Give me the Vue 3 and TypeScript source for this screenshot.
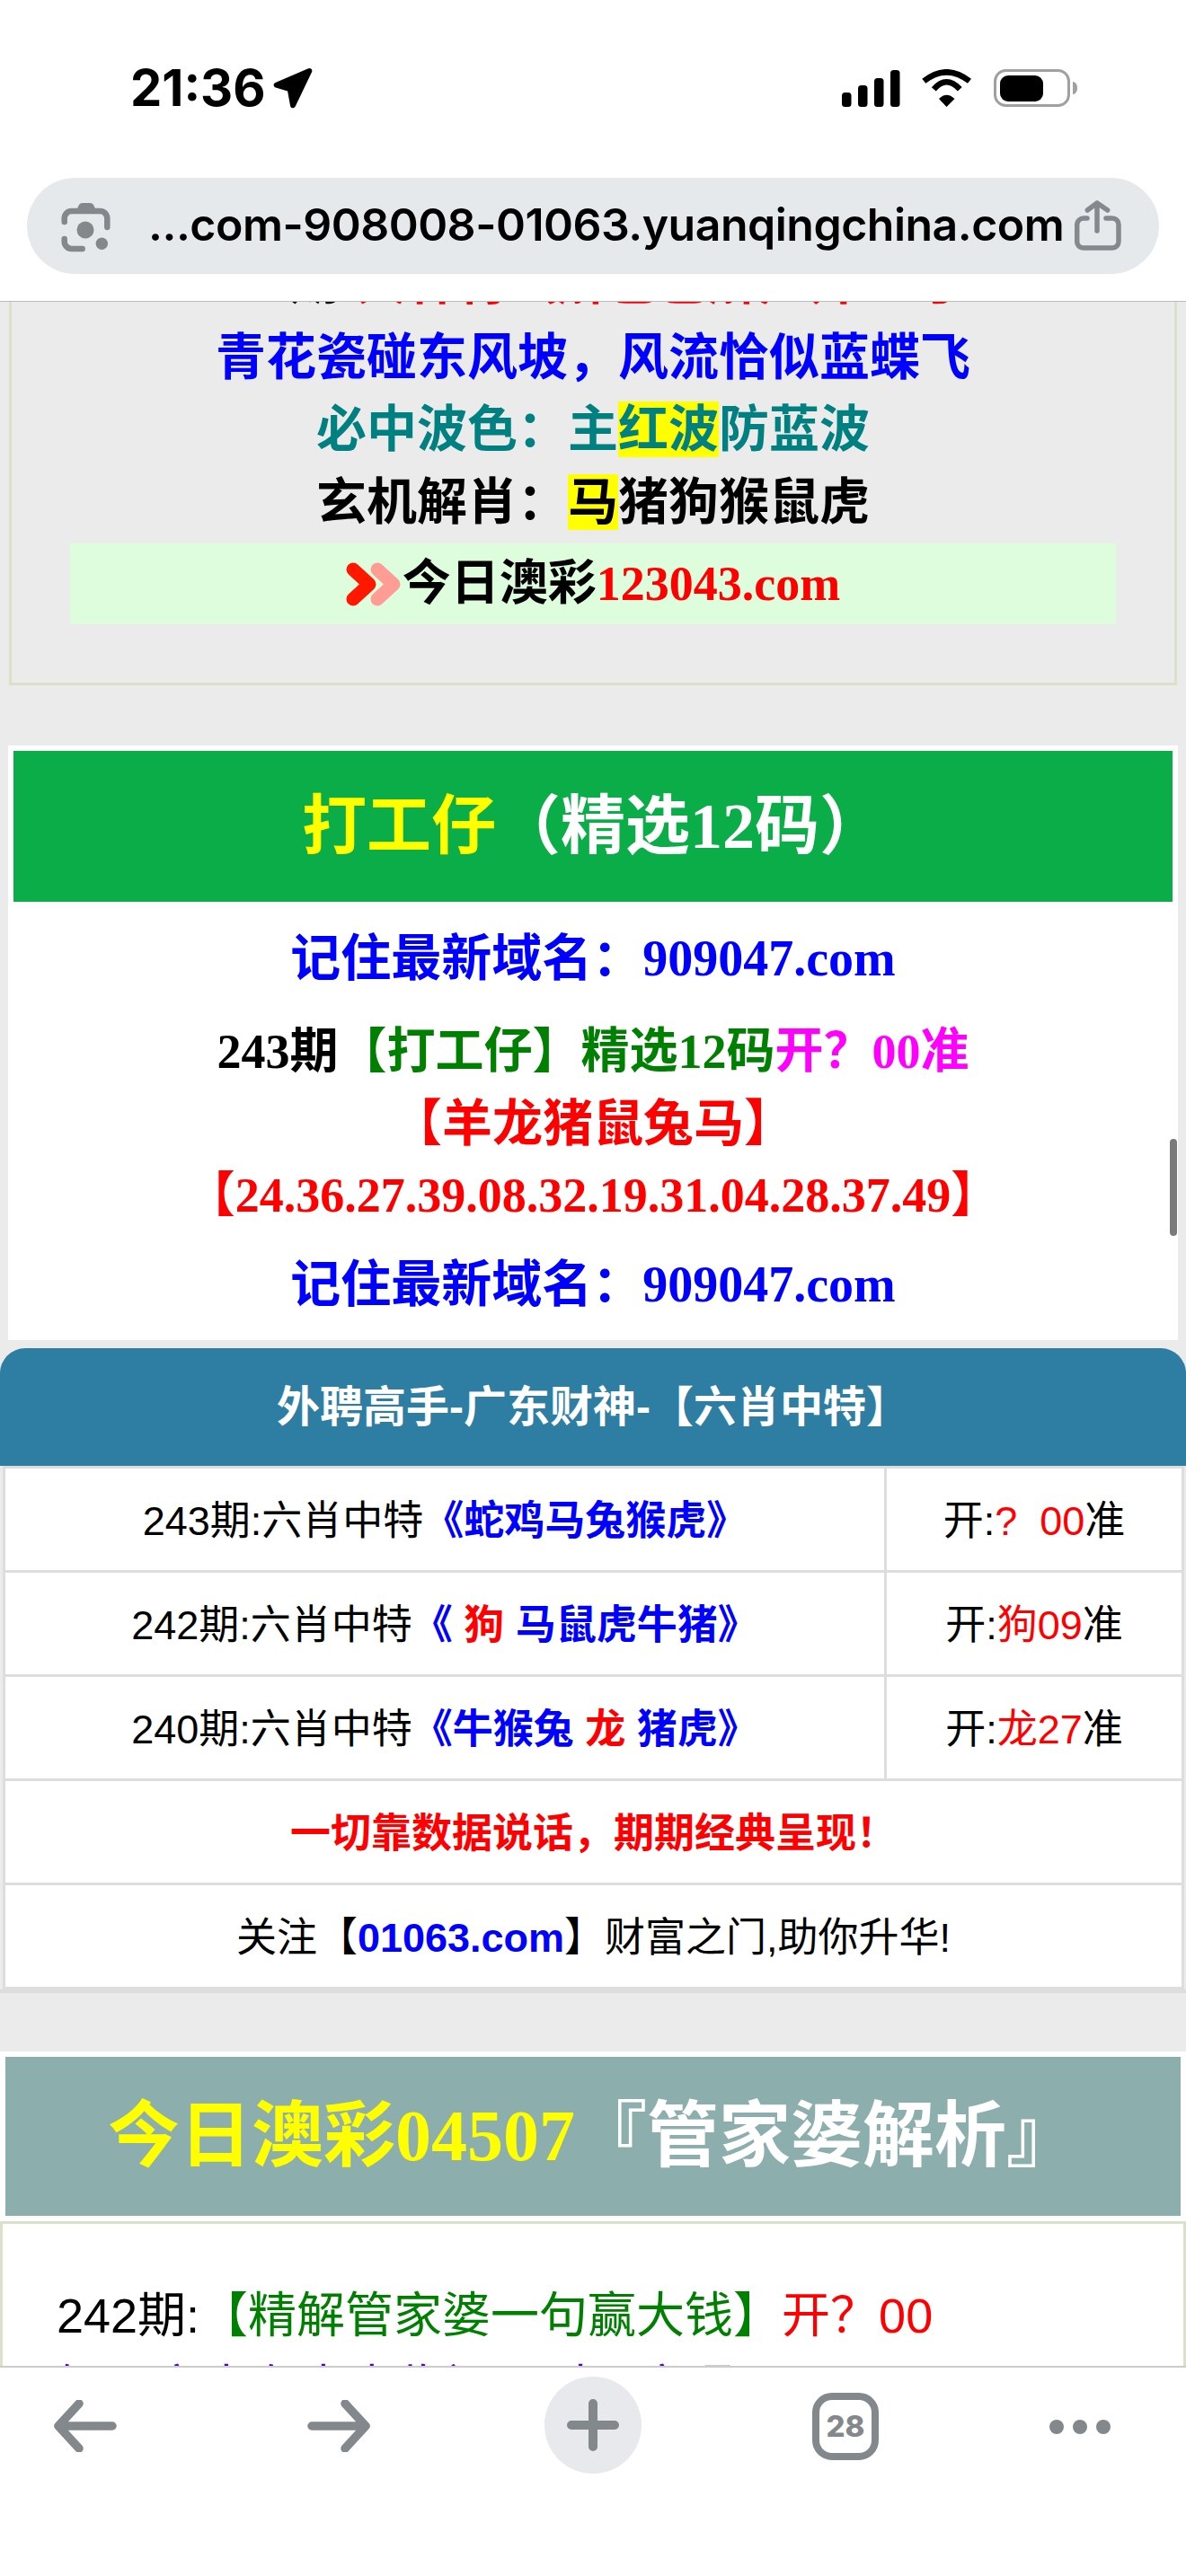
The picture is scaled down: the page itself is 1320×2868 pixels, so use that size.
<script setup lang="ts">
interface PickRow {
  period: string
  before: string
  hit: string
  after: string
  openHit: string
}

const pickRows: PickRow[] = [
  { period: '243期:六肖中特', before: '《蛇鸡马兔猴虎》', hit: '', after: '', openHit: '?  00' },
  { period: '242期:六肖中特', before: '《 ', hit: '狗', after: ' 马鼠虎牛猪》', openHit: '狗09' },
  { period: '240期:六肖中特', before: '《牛猴兔 ', hit: '龙', after: ' 猪虎》', openHit: '龙27' }
]
</script>

<template>
  <div class="phone">
    <!-- 顶部状态栏和地址栏 -->
    <header class="top">
      <div class="status">
        <div class="clock">
          <span>21:36</span>
          <svg class="locate" viewBox="0 0 50 50"><path d="M43.3 6 6.7 21.7 21.7 26 25 44.3Z" fill="#000" stroke="#000" stroke-width="6" stroke-linejoin="round" /></svg>
        </div>
        <div class="indicators">
          <svg class="signal" viewBox="0 0 65 41">
            <rect x="0" y="25" width="10.5" height="16" rx="3.5" />
            <rect x="18" y="17" width="10.5" height="24" rx="3.5" />
            <rect x="36" y="9" width="10.5" height="32" rx="3.5" />
            <rect x="54" y="0" width="10.5" height="41" rx="3.5" />
          </svg>
          <svg class="wifi" viewBox="0 0 58 42">
            <path d="M28.5 42 20 33Q28.5 24.500 37.500 33Z" />
            <path d="M14.300 22.300Q28.300 6.300 43.300 22.300" fill="none" stroke="#000" stroke-width="6.500" />
            <path d="M3.300 13.300Q28.300 -6.700 54 13.300" fill="none" stroke="#000" stroke-width="6.500" />
          </svg>
          <svg class="battery" viewBox="0 0 93 42">
            <rect x="1.500" y="1.500" width="82" height="39" rx="12" fill="none" stroke="#a0a0a0" stroke-width="3" />
            <rect x="7" y="7" width="48" height="29" rx="9" />
            <path d="M88 14c3 0 5 3 5 7s-2 7-5 7Z" fill="#a0a0a0" />
          </svg>
        </div>
      </div>
      <div class="urlbar">
        <svg class="lens" viewBox="0 0 60 60">
          <path d="M6.700 25V21a8 8 0 0 1 8-8h31.600a8 8 0 0 1 8 8v10M6.700 44v3a8 8 0 0 0 8 8h12" fill="none" stroke="#82888b" stroke-width="6.500" stroke-linecap="round" />
          <path d="M19 14 23 6Q24 4 27 4H35Q38 4 39 6L43 14Z" fill="#82888b" />
          <circle cx="30" cy="34" r="9.500" fill="#82888b" />
          <circle cx="48.300" cy="49.300" r="6.700" fill="#82888b" />
        </svg>
        <span class="url">...com-908008-01063.yuanqingchina.com</span>
        <svg class="share" viewBox="0 0 52 57">
          <path d="M25 3V34M14.300 11 25 3 36.700 11M14 20H10a7.300 7.300 0 0 0-7.300 7.300V46a7 7 0 0 0 7 7H42a7 7 0 0 0 7-7V27a7 7 0 0 0-7-7h-7" fill="none" stroke="#85898d" stroke-width="5.500" stroke-linecap="round" stroke-linejoin="round" />
        </svg>
      </div>
    </header>

    <!-- 网页内容 -->
    <main class="viewport">
      <div class="page">
        <section class="poem">
          <p class="red clipped"><span class="black">期:</span>大林村（解巴巴解）开？号</p>
          <p class="blue">青花瓷碰东风坡，风流恰似蓝蝶飞</p>
          <p class="teal">必中波色：主<mark>红波</mark>防蓝波</p>
          <p class="black">玄机解肖：<mark>马</mark>猪狗猴鼠虎</p>
          <div class="promo">
            <svg class="chevrons" viewBox="0 0 61 49">
              <path d="M35 8 53 24.500 35 41" fill="none" stroke="#ff9c94" stroke-width="15" stroke-linecap="round" stroke-linejoin="round" />
              <path d="M8 8 26 24.500 8 41" fill="none" stroke="#ff1800" stroke-width="15" stroke-linecap="round" stroke-linejoin="round" />
            </svg>
            <span>今日澳彩</span><span class="red">123043.com</span>
          </div>
        </section>

        <section class="worker">
          <h2><span class="yellow">打工仔</span>（精选12码）</h2>
          <p class="blue domain">记住最新域名：909047.com</p>
          <div class="numbers">
            <p class="period">243期<span class="green">【打工仔】精选12码</span><span class="magenta">开？00准</span></p>
            <p class="red">【羊龙猪鼠兔马】</p>
            <p class="red code">【24.36.27.39.08.32.19.31.04.28.37.49】</p>
          </div>
          <p class="blue domain last">记住最新域名：909047.com</p>
        </section>

        <section class="picks">
          <h3>外聘高手-广东财神-【六肖中特】</h3>
          <table>
            <tbody>
              <tr v-for="row in pickRows" :key="row.period">
                <td class="main">
                  {{ row.period }}<b class="blue">{{ row.before }}<span class="red">{{ row.hit }}</span>{{ row.after }}</b>
                </td>
                <td class="open">开:<span class="red">{{ row.openHit }}</span>准</td>
              </tr>
              <tr>
                <td colspan="2" class="slogan">一切靠数据说话，期期经典呈现！</td>
              </tr>
              <tr>
                <td colspan="2" class="follow">关注【<b class="blue">01063.com</b>】财富之门,助你升华!</td>
              </tr>
            </tbody>
          </table>
        </section>

        <section class="steward">
          <h2><span class="yellow">今日澳彩04507</span>『管家婆解析』</h2>
          <div class="analysis">
            <p>242期:<span class="green">【精解管家婆一句赢大钱】</span><span class="red">开？00</span></p>
            <p class="purple">解：家中有喜事临门，财运亨通</p>
          </div>
        </section>
      </div>
      <div class="scrollbar"></div>
    </main>

    <!-- 底部工具栏 -->
    <footer class="toolbar">
      <svg class="tool arrow" viewBox="0 0 70 58"><path d="M28 4 5 29 28 54M5 29H65" fill="none" stroke="#82888b" stroke-width="9.500" stroke-linecap="round" stroke-linejoin="round" /></svg>
      <svg class="tool arrow" viewBox="0 0 70 58"><path d="M42 4 65 29 42 54M65 29H5" fill="none" stroke="#82888b" stroke-width="9.500" stroke-linecap="round" stroke-linejoin="round" /></svg>
      <div class="plus">
        <svg viewBox="0 0 58 58"><path d="M29 5V53M5 29H53" fill="none" stroke="#82888b" stroke-width="10" stroke-linecap="round" /></svg>
      </div>
      <div class="tabs">28</div>
      <div class="dots"><i></i><i></i><i></i></div>
    </footer>
  </div>
</template>

<style>
html,
body {
  margin: 0;
  background: #fff;
}
</style>

<style scoped>
.phone {
  width: 1320px;
  height: 2868px;
  display: flex;
  flex-direction: column;
  overflow: hidden;
  background: #fff;
  font-family: "Liberation Sans", "Noto Sans CJK SC", sans-serif;
}

p,
h2,
h3 {
  margin: 0;
}

/* 顶部 */
.top {
  height: 336px;
  flex: none;
  box-sizing: border-box;
  border-bottom: 1px solid #bbb;
  padding: 74px 30px 0;
  background: #fff;
}

.status {
  height: 48px;
  display: flex;
  justify-content: space-between;
  align-items: center;
  padding: 0 91px 0 115px;
}

.clock {
  display: flex;
  align-items: center;
  gap: 5px;
  font: 700 56px/48px Inter, sans-serif;
  color: #000;
}

.locate {
  width: 50px;
  height: 50px;
}

.indicators {
  display: flex;
  align-items: center;
  gap: 23px;
}

.signal {
  width: 65px;
  height: 41px;
}

.wifi {
  width: 58px;
  height: 42px;
}

.battery {
  width: 93px;
  height: 42px;
}

.urlbar {
  height: 107px;
  margin-top: 76px;
  display: flex;
  align-items: center;
  border-radius: 54px;
  background: #e6e9ec;
  padding: 0 42px 0 35px;
}

.lens {
  width: 60px;
  height: 60px;
  flex: none;
}

.url {
  flex: 1;
  margin: 0 0 3px 40px;
  white-space: nowrap;
  font: 600 50px/1 Inter, sans-serif;
  letter-spacing: -0.5px;
  color: #000;
}

.share {
  width: 52px;
  height: 57px;
  flex: none;
}

/* 内容区 */
.viewport {
  flex: 1;
  position: relative;
  overflow: hidden;
  background: #ebebeb;
}

.page {
  margin-top: -62px;
}

.poem,
.worker,
.steward h2 {
  font-family: "Liberation Serif", "Noto Sans CJK SC", serif;
  font-weight: 700;
}

.poem {
  margin: 0 10px;
  border: 3px solid #d9e2c8;
  padding-bottom: 65px;
  text-align: center;
  font-size: 56px;
  line-height: 80.500px;
}

.poem mark {
  background: #ff0;
  color: inherit;
}

.clipped {
  margin: -3px 0 3px;
  padding-left: 70px;
  white-space: nowrap;
}

.promo {
  margin: 6px 65px 0;
  height: 90px;
  display: flex;
  justify-content: center;
  align-items: center;
  background: #ddfddd;
  font-size: 54px;
  color: #000;
}

.chevrons {
  width: 61px;
  height: 49px;
  margin-right: 2px;
}

.worker {
  margin: 67px 9px 0;
  padding: 6px 6px 22px;
  background: #fff;
  text-align: center;
  font-size: 56px;
  line-height: 80px;
}

.worker h2 {
  height: 168px;
  background: #0aad47;
  color: #fff;
  font-size: 72px;
  line-height: 168px;
}

.domain {
  margin-top: 23px;
}

.numbers {
  margin-top: 24px;
  white-space: nowrap;
}

.period {
  font-size: 54px;
}

.code {
  font-size: 54px;
}

.domain.last {
  margin-top: 19px;
}

.picks {
  margin-top: 9px;
  border-bottom: 4px solid #ddd;
}

.picks h3 {
  height: 131px;
  border-radius: 28px 28px 0 0;
  background: #2e7da3;
  color: #fff;
  text-align: center;
  font-size: 48px;
  font-weight: 700;
  line-height: 131px;
}

table {
  width: 1315px;
  margin-left: 3px;
  border-collapse: collapse;
  table-layout: fixed;
  background: #fff;
}

td {
  height: 108px;
  padding: 0 0 5px;
  border: 3px solid #ddd;
  text-align: center;
  font-size: 45px;
  color: #000;
  white-space: pre;
}

.main {
  width: 978px;
}

.slogan {
  font-weight: 700;
  color: #f00;
}

.steward {
  margin-top: 65px;
  background: #fff;
  padding-top: 6px;
}

.steward h2 {
  height: 177px;
  margin: 0 6px;
  background: #8cafae;
  color: #fff;
  text-align: center;
  font-size: 80px;
  line-height: 177px;
}

.analysis {
  margin-top: 6px;
  border: 3px solid #d9e2c8;
  padding: 62px 60px 40px;
  font-size: 54px;
  line-height: 80px;
  color: #000;
  white-space: nowrap;
}

.purple {
  margin-top: 1px;
}

.scrollbar {
  position: absolute;
  top: 932px;
  right: 10px;
  width: 8px;
  height: 108px;
  border-radius: 4px;
  background: #7a7a7a;
}

.black { color: #000; }
.blue { color: #00f; }
.red { color: #f00; }
.teal { color: #008080; }
.green { color: #008000; }
.yellow { color: #ff0; }
.magenta { color: #f0f; }
.purple { color: #5b00c8; }

/* 底部 */
.toolbar {
  height: 234px;
  flex: none;
  box-sizing: border-box;
  border-top: 2px solid #ccc;
  position: relative;
  background: #fff;
}

.tool,
.plus,
.tabs,
.dots {
  position: absolute;
}

.arrow {
  top: 36px;
  left: 60px;
  width: 70px;
  height: 58px;
}

.arrow + .arrow {
  left: 342px;
}

.plus {
  top: 10px;
  left: 606px;
  width: 108px;
  height: 108px;
  display: flex;
  justify-content: center;
  align-items: center;
  border-radius: 50%;
  background: #e8e9ed;
}

.plus svg {
  width: 58px;
  height: 58px;
}

.tabs {
  top: 28px;
  left: 904px;
  box-sizing: border-box;
  width: 74px;
  height: 75px;
  border: 8px solid #82888b;
  border-radius: 22px;
  color: #82888b;
  text-align: center;
  font: 800 33px/59px Inter, sans-serif;
}

.dots {
  top: 58px;
  left: 1168px;
  display: flex;
  gap: 10px;
}

.dots i {
  width: 16px;
  height: 16px;
  border-radius: 50%;
  background: #82888b;
}
</style>
